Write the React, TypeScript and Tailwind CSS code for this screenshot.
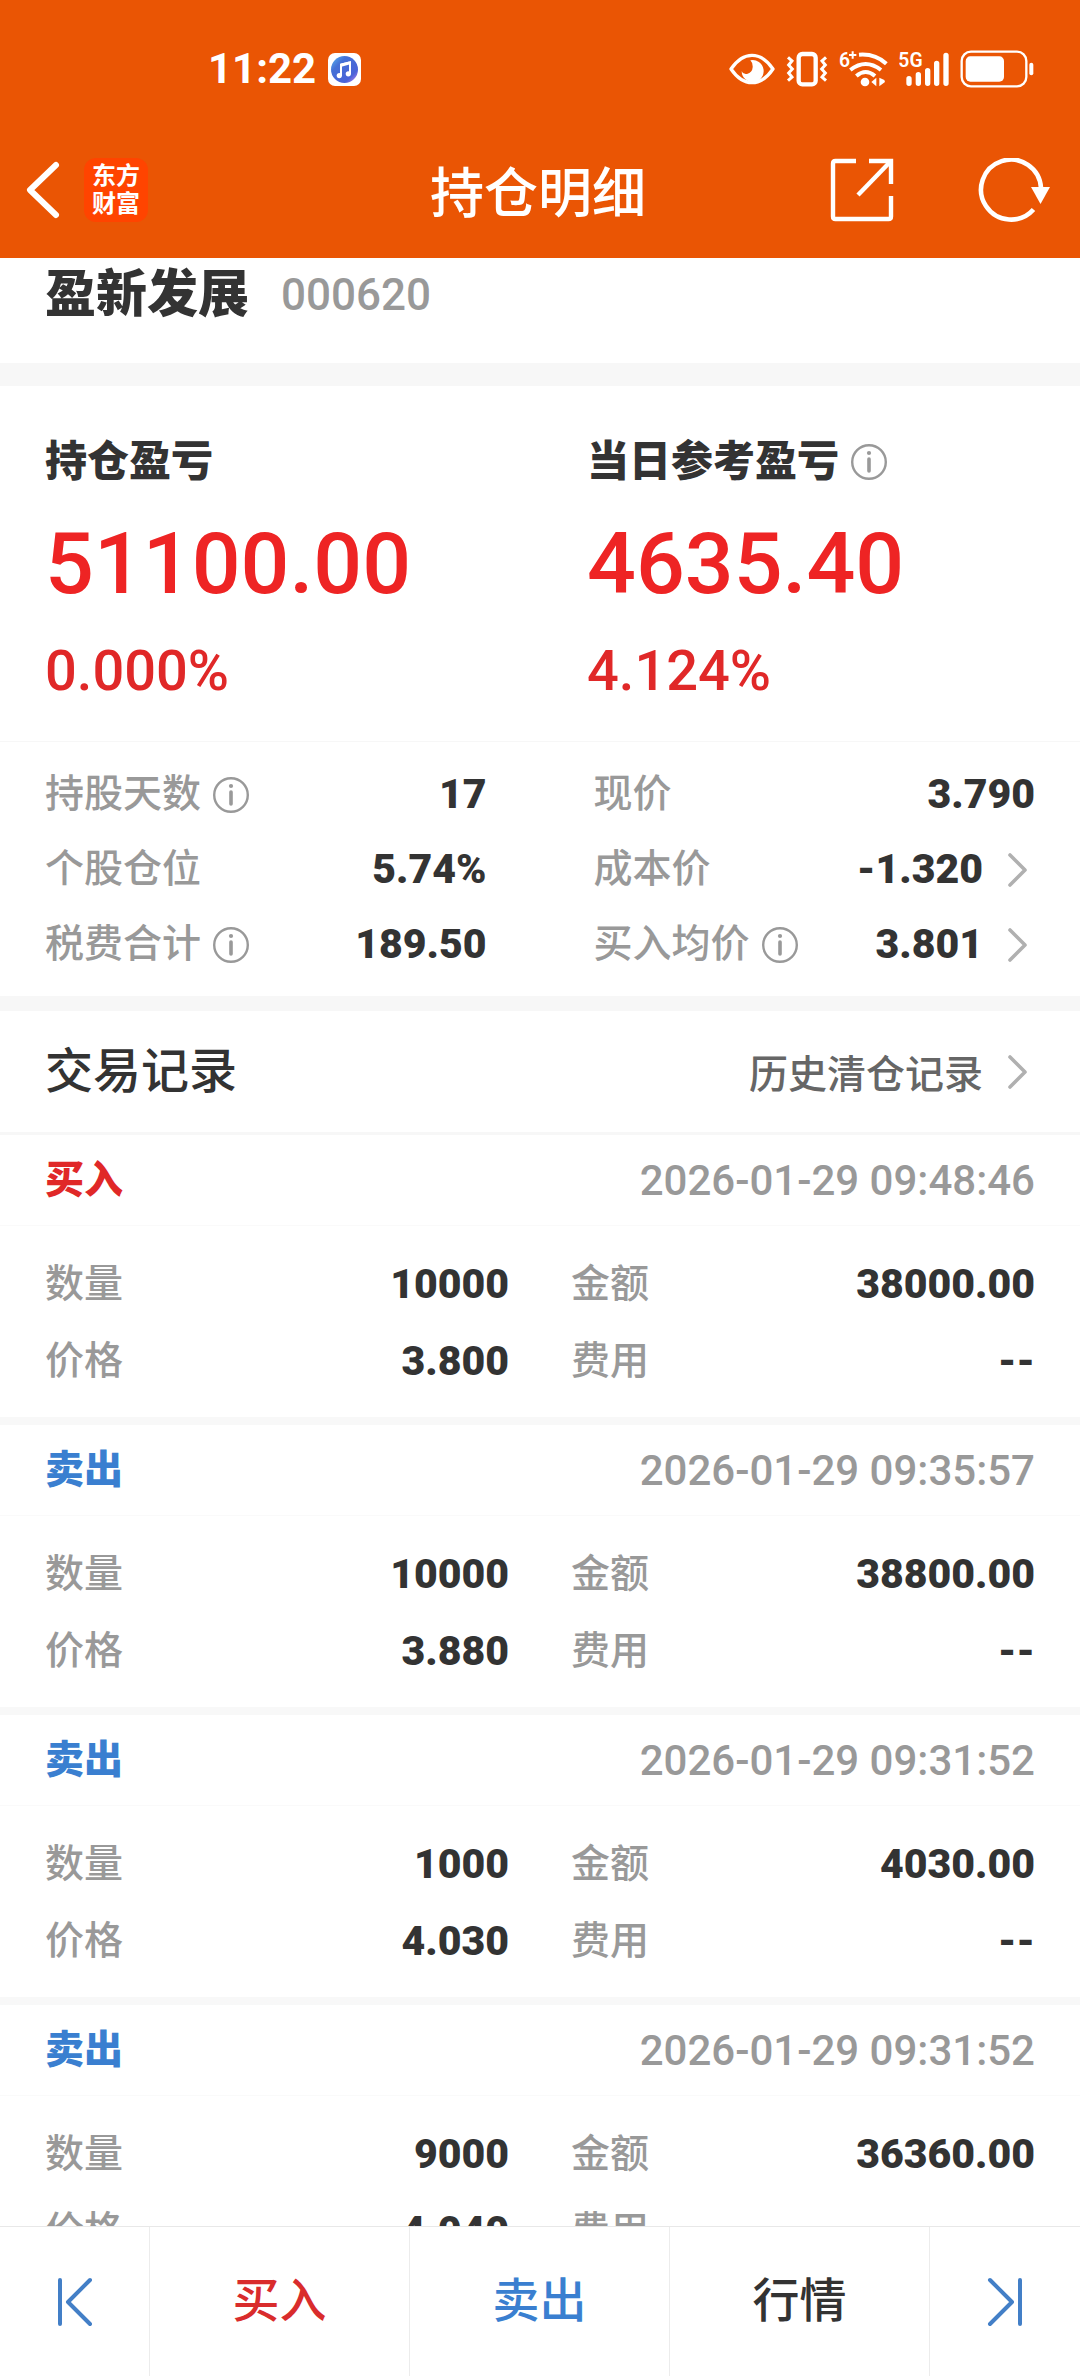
import type { ReactNode } from "react";

type Detail = {
  label: string;
  value: string;
  info?: boolean;
  link?: boolean;
};

type Trade = {
  side: "buy" | "sell";
  time: string;
  quantity: string;
  amount: string;
  price: string;
  fee: string;
};

const leftDetails: Detail[] = [
  { label: "持股天数", value: "17", info: true },
  { label: "个股仓位", value: "5.74%" },
  { label: "税费合计", value: "189.50", info: true },
];

const rightDetails: Detail[] = [
  { label: "现价", value: "3.790" },
  { label: "成本价", value: "-1.320", link: true },
  { label: "买入均价", value: "3.801", info: true, link: true },
];

const trades: Trade[] = [
  { side: "buy", time: "2026-01-29 09:48:46", quantity: "10000", amount: "38000.00", price: "3.800", fee: "--" },
  { side: "sell", time: "2026-01-29 09:35:57", quantity: "10000", amount: "38800.00", price: "3.880", fee: "--" },
  { side: "sell", time: "2026-01-29 09:31:52", quantity: "1000", amount: "4030.00", price: "4.030", fee: "--" },
  { side: "sell", time: "2026-01-29 09:31:52", quantity: "9000", amount: "36360.00", price: "4.040", fee: "--" },
];

const InfoIcon = () => (
  <svg className="w-9 h-9 shrink-0 text-[#999]" viewBox="0 0 36 36" fill="none" stroke="currentColor">
    <circle cx="18" cy="18" r="16.8" strokeWidth="2.4" />
    <circle cx="18" cy="9" r="2.1" fill="currentColor" stroke="none" />
    <path d="M18 15v12" strokeWidth="3.6" strokeLinecap="round" />
  </svg>
);

const ChevronIcon = () => (
  <svg className="w-5 h-9 shrink-0 text-[#b0b0b0]" viewBox="0 0 20 36" fill="none" stroke="currentColor" strokeWidth="3.6" strokeLinecap="round" strokeLinejoin="round">
    <path d="M3 3l15 15L3 33" />
  </svg>
);

const StatusBar = () => (
  <div className="flex items-center justify-between h-[130px] pt-2 pl-[208px] pr-[46px]">
    <div className="flex items-center gap-3">
      <span className="text-[42px] leading-none font-bold">11:22</span>
      {/* Music app */}
      <svg className="w-[33px] h-[33px]" viewBox="0 0 33 33">
        <defs>
          <linearGradient id="music" x1="0" y1="0" x2="1" y2="1">
            <stop offset="0" stopColor="#58b7f0" />
            <stop offset="0.3" stopColor="#4470d6" />
            <stop offset="0.75" stopColor="#4a63d8" />
            <stop offset="1" stopColor="#d884f0" />
          </linearGradient>
        </defs>
        <rect width="33" height="33" rx="7" fill="#fff" />
        <circle cx="16.5" cy="16.5" r="13.5" fill="url(#music)" />
        <path d="M13 23V11.5l9-2.3v12" fill="none" stroke="#fff" strokeWidth="2" />
        <path d="M13 12.2l9-2.3" stroke="#fff" strokeWidth="3" />
        <circle cx="11.3" cy="22.6" r="2.6" fill="#fff" />
        <circle cx="20.3" cy="20.8" r="2.6" fill="#fff" />
      </svg>
    </div>

    <div className="flex items-center gap-[11px]">
      {/* Eye comfort */}
      <svg className="w-[46px] h-[38px]" viewBox="0 0 138 114" fill="none">
        <path d="M6 57Q34 16 69 16Q104 16 132 57Q104 98 69 98Q34 98 6 57Z" stroke="#fff" strokeWidth="10" strokeLinejoin="round" />
        <path d="M64 31A33 33 0 1 1 38 64Q42 74 54 72Q70 68 71 52Q72 39 64 31Z" fill="#fff" />
      </svg>
      {/* Vibrate */}
      <svg className="w-[42px] h-[38px]" viewBox="0 0 126 114" fill="none" stroke="#fff">
        <rect x="38" y="12" width="51" height="91" rx="11" strokeWidth="13" />
        <path d="M6 22l12 11-10 12 11 12-11 12 10 12-12 11" strokeWidth="9" />
        <path d="M120 22l-12 11 10 12-11 12 11 12-10 12 12 11" strokeWidth="9" />
      </svg>
      {/* Wi-Fi */}
      <svg className="w-[49px] h-[38px]" viewBox="0 0 147 114" fill="none" stroke="#fff" strokeWidth="12">
        <text x="0" y="51" fill="#fff" stroke="none" fontSize="58" fontWeight="600">6</text>
        <path d="M30 15h22M41 4v22" strokeWidth="6" />
        <path d="M60 14Q108 10 142 41" />
        <path d="M34 60Q80 24 126 60" />
        <path d="M52 78Q80 54 108 78" />
        <circle cx="78" cy="96" r="13" fill="#fff" stroke="none" />
        <path d="M112 83v26L97 96zM121 83v26l17-13-2-6z" fill="#fff" stroke="none" />
      </svg>
      {/* 5G signal */}
      <svg className="w-[50px] h-[38px]" viewBox="0 0 150 114" stroke="#fff" strokeWidth="16" strokeLinecap="round">
        <text x="-2" y="51" fill="#fff" stroke="none" fontSize="58" fontWeight="600">5G</text>
        <path d="M30 86v14M58 74v26M86 62v38M113 40v60M141 16v84" />
      </svg>
      {/* Battery */}
      <svg className="w-[74px] h-[38px]" viewBox="0 0 222 114" fill="none">
        <rect x="5" y="5" width="194" height="104" rx="28" stroke="#fff" strokeWidth="7" />
        <rect x="17" y="19" width="115" height="76" rx="14" fill="#fff" />
        <path d="M214 44v26" stroke="#fff" strokeWidth="12" strokeLinecap="round" />
      </svg>
    </div>
  </div>
);

const Header = () => (
  <header className="shrink-0 pb-2 bg-[#ea5504] text-white">
    <StatusBar />
    <div className="grid grid-cols-[1fr_auto_1fr] items-center h-[120px] pl-6 pr-7">
      <div className="flex items-center gap-[22px]">
        <button type="button" aria-label="返回">
          <svg className="w-[38px] h-[60px]" viewBox="0 0 38 60" fill="none" stroke="#fff" strokeWidth="6" strokeLinecap="round" strokeLinejoin="round">
            <path d="M32 5L6 30l26 25" />
          </svg>
        </button>
        <div className="flex flex-col items-center justify-center w-16 h-16 rounded-xl bg-[#ff4400] text-2xl leading-7 font-bold">
          <span>东方</span>
          <span>财富</span>
        </div>
      </div>
      <h1 className="font-['Noto_Sans_CJK_SC',sans-serif] text-[54px] leading-[64px] font-medium">持仓明细</h1>
      <div className="flex items-center justify-end gap-[84px]">
        <button type="button" aria-label="分享">
          <svg className="w-16 h-16" viewBox="0 0 64 64" fill="none" stroke="#fff" strokeWidth="4.4">
            <path d="M26 3H5.5Q3 3 3 5.5v53Q3 61 5.5 61h53Q61 61 61 58.5V38" />
            <path d="M39 3h22v23" />
            <path d="M60 4L28 37" />
          </svg>
        </button>
        <button type="button" aria-label="刷新">
          <svg className="w-[74px] h-16" viewBox="0 0 74 64" fill="none" stroke="#fff">
            <path d="M63 30A30 30 0 1 0 55.5 51.5" strokeWidth="4.6" />
            <path d="M53 29h19L62.5 46z" fill="#fff" stroke="none" />
          </svg>
        </button>
      </div>
    </div>
  </header>
);

const Profit = ({ label, amount, percent, info }: { label: string; amount: string; percent: string; info?: boolean }) => (
  <div className="flex flex-col gap-[26px]">
    <h3 className="flex items-center gap-3 text-[42px] leading-[52px] font-black text-[#333]">
      {label}
      {info && <InfoIcon />}
    </h3>
    <p className="text-[86px] leading-[100px] font-medium text-[#ee2424]">{amount}</p>
    <p className="text-[56px] leading-[62px] font-medium text-[#e02828]">{percent}</p>
  </div>
);

const DetailList = ({ items }: { items: Detail[] }) => (
  <dl>
    {items.map((item) => (
      <div key={item.label} className="flex items-center justify-between h-[75px]">
        <dt className="flex items-center gap-3 text-[39px] font-medium text-[#999]">
          {item.label}
          {item.info && <InfoIcon />}
        </dt>
        <dd className="flex items-center gap-6 text-[41px] font-black text-[#333]">
          {item.value}
          {item.link && (
            <span className="flex pr-2">
              <ChevronIcon />
            </span>
          )}
        </dd>
      </div>
    ))}
  </dl>
);

const Field = ({ label, value }: { label: string; value: string }) => (
  <div className="flex items-center justify-between h-[77px]">
    <dt className="text-[39px] font-medium text-[#999]">{label}</dt>
    <dd className="text-[41px] font-black text-[#333]">{value}</dd>
  </div>
);

const TradeRecord = ({ trade }: { trade: Trade }) => (
  <li className="border-b-8 border-[#f8f8f8]">
    <div className="flex items-center justify-between h-[91px] px-[45px] border-b border-[#fafafa]">
      {trade.side === "buy" ? (
        <span className="text-[39px] font-black text-[#e02828]">买入</span>
      ) : (
        <span className="text-[39px] font-black text-[#3a7fd0]">卖出</span>
      )}
      <time className="text-[42px] font-medium text-[#999]">{trade.time}</time>
    </div>
    <dl className="grid grid-cols-2 gap-x-[62px] px-[45px] pt-5 pb-[17px]">
      <Field label="数量" value={trade.quantity} />
      <Field label="金额" value={trade.amount} />
      <Field label="价格" value={trade.price} />
      <Field label="费用" value={trade.fee} />
    </dl>
  </li>
);

const NavButton = ({ className, label, children }: { className: string; label?: string; children: ReactNode }) => (
  <button type="button" aria-label={label} className={`flex items-center justify-center text-[47px] font-medium ${className}`}>
    {children}
  </button>
);

const BottomNav = () => (
  <nav className="shrink-0 grid grid-cols-[150px_1fr_1fr_1fr_150px] h-[150px] bg-white border-t border-[#e8e8e8] divide-x divide-[#ececec]">
    <NavButton className="text-[#437fc7]" label="上一个">
      <svg className="w-9 h-[50px]" viewBox="0 0 36 50" fill="none" stroke="currentColor" strokeWidth="4" strokeLinecap="round" strokeLinejoin="round">
        <path d="M3 3v44M33 3L11 25l22 22" />
      </svg>
    </NavButton>
    <NavButton className="text-[#d92c2c]">买入</NavButton>
    <NavButton className="text-[#3a7fd0]">卖出</NavButton>
    <NavButton className="text-[#333]">行情</NavButton>
    <NavButton className="text-[#437fc7]" label="下一个">
      <svg className="w-9 h-[50px]" viewBox="0 0 36 50" fill="none" stroke="currentColor" strokeWidth="4" strokeLinecap="round" strokeLinejoin="round">
        <path d="M33 3v44M3 3l22 22L3 47" />
      </svg>
    </NavButton>
  </nav>
);

const App = () => {
  return (
    <div className="flex flex-col h-screen overflow-hidden bg-white font-['Roboto','Noto_Sans_CJK_SC',sans-serif]">
      <Header />

      <main className="flex-1 min-h-0 overflow-hidden">
        {/* Stock */}
        <div className="flex items-center gap-8 px-[45px] pt-[5px] pb-9 border-b-[23px] border-[#f7f7f7]">
          <h2 className="text-[51px] leading-[64px] font-black text-[#333]">盈新发展</h2>
          <span className="text-[44px] leading-[64px] font-medium text-[#999]">000620</span>
        </div>

        {/* Profit and loss */}
        <section className="grid grid-cols-2 gap-x-[94px] px-[45px] pt-[50px] pb-[39px] border-b border-[#f7f7f7]">
          <Profit label="持仓盈亏" amount="51100.00" percent="0.000%" />
          <Profit label="当日参考盈亏" amount="4635.40" percent="4.124%" info />
        </section>

        <section className="grid grid-cols-2 gap-x-[107px] px-[45px] pt-[15px] pb-[14px] border-b-[15px] border-[#f7f7f7]">
          <DetailList items={leftDetails} />
          <DetailList items={rightDetails} />
        </section>

        {/* Trades */}
        <section>
          <div className="flex items-center justify-between h-[124px] px-[45px] border-b-[3px] border-[#f7f7f7]">
            <h2 className="text-5xl font-medium text-[#333]">交易记录</h2>
            <a href="#history" className="flex items-center gap-6 pr-2 font-['Noto_Sans_CJK_SC',sans-serif] text-[39px] font-medium text-[#666]">
              历史清仓记录
              <ChevronIcon />
            </a>
          </div>
          <ul>
            {trades.map((trade, index) => (
              <TradeRecord key={index} trade={trade} />
            ))}
          </ul>
        </section>
      </main>

      <BottomNav />
    </div>
  );
};

export default App;
